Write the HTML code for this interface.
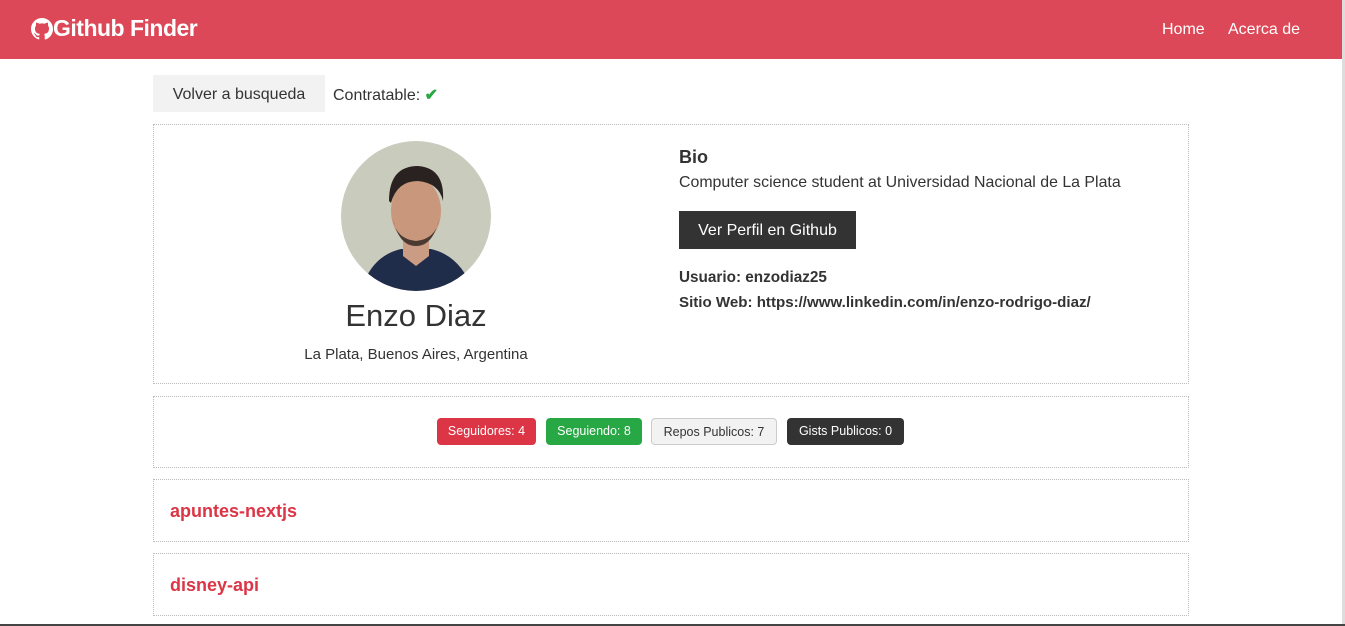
<!DOCTYPE html>
<html><head><meta charset="utf-8"><style>
*{box-sizing:border-box;margin:0;padding:0}
body{width:1345px;height:626px;overflow:hidden;background:#fff;font-family:"Liberation Sans",Arial,sans-serif;color:#333;position:relative}
.nav{position:absolute;left:0;top:0;width:1342px;height:59px;background:#dc4857;color:#fff}
.logo{position:absolute;left:31px;top:15px;font-size:23px;font-weight:bold;letter-spacing:-0.5px;display:flex;align-items:center}
.links{position:absolute;top:21px;font-size:16px}
.a{position:absolute;font-size:16px}
.box{position:absolute;left:153px;width:1036px;border:1px dotted #bbb}
.badge{position:absolute;top:418px;height:27px;border-radius:4px;font-size:12.5px;line-height:27px;text-align:center}
.sb{position:absolute;right:0;top:0;width:3px;height:626px;background:#ddd}
</style></head><body>
<div class="nav">
 <div class="logo"><svg width="22" height="22" viewBox="0 0 16 16" fill="#fff"><path d="M8 0C3.58 0 0 3.58 0 8c0 3.54 2.290 6.530 5.470 7.590.4.07.55-.17.55-.38v-1.33c-2.23.48-2.7-1.07-2.7-1.07-.36-.93-.89-1.170-.89-1.170-.73-.5.05-.49.05-.49.8.06 1.23.83 1.23.83.71 1.22 1.870.87 2.330.66.07-.52.28-.87.5-1.07-1.78-.2-3.64-.89-3.64-3.95 0-.87.31-1.59.82-2.15-.08-.2-.36-1.020.08-2.12 0 0 .67-.21 2.2.82.64-.18 1.32-.27 2-.27.68 0 1.360.09 2 .27 1.53-1.040 2.2-.82 2.2-.82.44 1.1.16 1.920.08 2.12.51.56.82 1.27.82 2.15 0 3.07-1.87 3.75-3.65 3.95.29.25.54.73.54 1.48v2.2c0 .21.15.46.55.38A8.013 8.013 0 0016 8c0-4.42-3.58-8-8-8z"/></svg>Github Finder</div>
 <div class="links" style="left:1162px">Home</div>
 <div class="links" style="left:1228px">Acerca de</div>
</div>
<div style="position:absolute;left:153px;top:75px;width:172px;height:37px;background:#f2f2f2;font-size:16px;line-height:39px;text-align:center">Volver a busqueda</div>
<div class="a" style="left:333px;top:85px">Contratable: <span style="color:#28a745;font-weight:bold">✔</span></div>
<div class="box" style="top:124px;height:260px"></div>
<svg style="position:absolute;left:341px;top:141px" width="150" height="150" viewBox="0 0 150 150">
<defs><clipPath id="c"><circle cx="75" cy="75" r="75"/></clipPath></defs>
<g clip-path="url(#c)"><rect width="150" height="150" fill="#c9cbbd"/>
<path d="M20 150 Q30 115 60 108 L90 108 Q120 115 132 150Z" fill="#1f2c4a"/>
<path d="M62 95 L88 95 L88 115 L75 125 L62 115Z" fill="#c99c83"/>
<ellipse cx="75" cy="70" rx="25" ry="33" fill="#c8977c"/>
<path d="M48 60 Q48 25 77 25 Q104 27 102 60 Q98 42 77 40 Q56 40 50 62Z" fill="#2a2220"/>
<path d="M52 78 Q58 105 75 105 Q92 105 98 78 Q95 98 75 100 Q55 98 52 78Z" fill="#4a3a32"/></g></svg>
<div class="a" style="left:300px;top:298px;width:232px;text-align:center;font-size:31px">Enzo Diaz</div>
<div class="a" style="left:290px;top:346px;width:252px;text-align:center;font-size:15px">La Plata, Buenos Aires, Argentina</div>
<div class="a" style="left:679px;top:147px;font-size:18px;font-weight:bold">Bio</div>
<div class="a" style="left:679px;top:174px;font-size:15.9px">Computer science student at Universidad Nacional de La Plata</div>
<div style="position:absolute;left:679px;top:211px;width:177px;height:38px;background:#333;color:#fff;font-size:16px;line-height:39px;text-align:center">Ver Perfil en Github</div>
<div class="a" style="left:679px;top:269px;font-size:15.3px;font-weight:bold">Usuario: enzodiaz25</div>
<div class="a" style="left:679px;top:294px;font-size:15.1px;font-weight:bold">Sitio Web: https://www.linkedin.com/in/enzo-rodrigo-diaz/</div>
<div class="box" style="top:396px;height:72px"></div>
<div class="badge" style="left:437px;width:99px;background:#dc3545;color:#fff">Seguidores: 4</div>
<div class="badge" style="left:546px;width:96px;background:#28a745;color:#fff">Seguiendo: 8</div>
<div class="badge" style="left:651px;width:126px;background:#f2f2f2;border:1px solid #ccc;color:#333">Repos Publicos: 7</div>
<div class="badge" style="left:787px;width:117px;background:#333;color:#fff">Gists Publicos: 0</div>
<div class="box" style="top:479px;height:63px"></div>
<div class="a" style="left:170px;top:501px;font-size:18px;font-weight:bold;color:#dc3545">apuntes-nextjs</div>
<div class="box" style="top:553px;height:63px"></div>
<div class="a" style="left:170px;top:575px;font-size:18px;font-weight:bold;color:#dc3545">disney-api</div>
<div class="sb"></div>
<div style="position:absolute;left:0;top:624px;width:1345px;height:2px;background:#444"></div>
</body></html>
